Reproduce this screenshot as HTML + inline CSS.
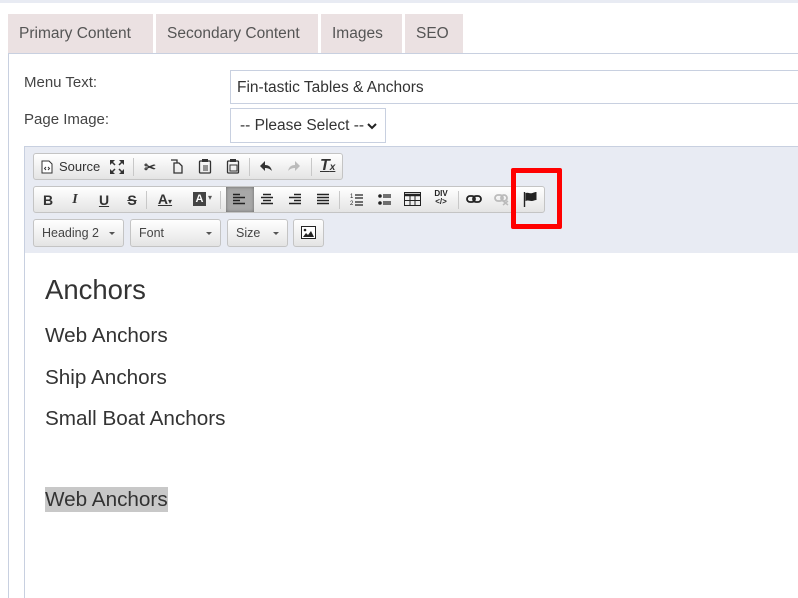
<!DOCTYPE html>
<html><head><meta charset="utf-8"><style>
*{box-sizing:border-box;margin:0;padding:0}
html,body{width:798px;height:598px;overflow:hidden}
body{background:#fff;font-family:"Liberation Sans",Arial,sans-serif;position:relative}
.a{position:absolute}
.tab{position:absolute;top:14px;height:39px;background:#ebe1e2;color:#555;font-size:15.5px;line-height:40px;padding-left:11px}
.lbl{position:absolute;left:24px;font-size:15px;color:#444}
.grp{position:absolute;border:1px solid #c4c4c4;border-radius:3px;background:linear-gradient(#fff,#e4e4e4);height:27px}
.ic{position:absolute;font-size:14px;color:#333;font-weight:bold;text-align:center;width:20px;line-height:16px}
.sep{position:absolute;width:1px;height:18px;background:#c8c8c8}
.combo{position:absolute;top:219px;height:28px;border:1px solid #c4c4c4;border-radius:3px;background:linear-gradient(#fff,#e4e4e4);font-size:12.5px;color:#444;line-height:26px;padding-left:8px}
.combo:after{content:"";position:absolute;right:8px;top:12px;border:3px solid transparent;border-top:3px solid #555}
.p{position:absolute;left:45px;font-size:20.7px;color:#333;font-family:"Liberation Sans",Arial,sans-serif}
</style></head><body>
<div class="a" style="left:0;top:0;width:798px;height:3px;background:#e8ebf3"></div>
<div class="tab" style="left:8px;width:145px">Primary Content</div>
<div class="tab" style="left:156px;width:162px">Secondary Content</div>
<div class="tab" style="left:321px;width:81px">Images</div>
<div class="tab" style="left:405px;width:58px">SEO</div>
<div class="a" style="left:8px;top:53px;width:790px;height:545px;border-left:1px solid #c8d0e0;border-top:1px solid #c8d0e0"></div>
<div class="lbl" style="top:74px">Menu Text:</div>
<div class="lbl" style="top:111px">Page Image:</div>
<div class="a" style="left:230px;top:70px;width:580px;height:34px;border:1px solid #c8d0e0;font-size:15.5px;color:#333;line-height:33px;padding-left:6px">Fin-tastic Tables &amp; Anchors</div>
<div class="a" style="left:230px;top:108px;width:156px;height:35px;border:1px solid #c8d0e0;font-size:15.5px;color:#333;line-height:34px;padding-left:9px">-- Please Select --</div>
<svg class="a" style="left:366px;top:121px" width="12" height="10"><path d="M2 3l4 4 4-4" stroke="#222" stroke-width="2" fill="none"/></svg>
<div class="a" style="left:24px;top:146px;width:780px;height:460px;border:1px solid #c8d0e0"></div>
<div class="a" style="left:25px;top:147px;width:773px;height:106px;background:#e8ebf3"></div>
<!-- row1 -->
<div class="grp" style="left:33px;top:153px;width:310px"></div>
<svg class="a" style="left:41px;top:160px" width="12" height="14"><path d="M1 1h7l3 3v9H1z" fill="#fff" stroke="#333"/><path d="M5 7l-1.5 1.5L5 10M7 7l1.5 1.5L7 10" stroke="#333" fill="none"/></svg>
<div class="a" style="left:59px;top:159px;font-size:13px;color:#333">Source</div>
<svg class="a" style="left:109px;top:159px" width="16" height="16"><path d="M1 1h5L1 6zM15 1h-5l5 5zM1 15h5L1 10zM15 15h-5l5-5z" fill="#333"/><path d="M3 3l3 3M13 3l-3 3M3 13l3-3M13 13l-3-3" stroke="#333" stroke-width="1.5"/></svg>
<div class="sep" style="left:133px;top:158px"></div>
<div class="ic" style="left:140px;top:159px">✂</div>
<svg class="a" style="left:170px;top:159px" width="14" height="15"><path d="M1 1h6v3M4 4h5l3 3v7H4z" fill="none" stroke="#333" stroke-width="1.3"/></svg>
<svg class="a" style="left:198px;top:158px" width="14" height="16"><rect x="1.5" y="3" width="11" height="12" rx="1" fill="none" stroke="#333" stroke-width="1.3"/><rect x="4" y="1" width="6" height="3" fill="#333"/><path d="M5 8h5M5 10h5M5 12h5" stroke="#333"/></svg>
<svg class="a" style="left:226px;top:158px" width="14" height="16"><rect x="1.5" y="3" width="11" height="12" rx="1" fill="none" stroke="#333" stroke-width="1.3"/><rect x="4" y="1" width="6" height="3" fill="#333"/><rect x="4" y="7" width="7" height="6" fill="none" stroke="#333"/></svg>
<div class="sep" style="left:249px;top:158px"></div>
<svg class="a" style="left:259px;top:160px" width="14" height="12"><path d="M6 1L1 6l5 5V8c3 0 5 1 7 3-1-4-3-6-7-6z" fill="#333"/></svg>
<svg class="a" style="left:287px;top:160px" width="14" height="12"><path d="M8 1l5 5-5 5V8C5 8 3 9 1 11c1-4 3-6 7-6z" fill="#bbb"/></svg>
<div class="sep" style="left:311px;top:158px"></div>
<div class="a" style="left:320px;top:157px;font-size:16px;font-style:italic;font-weight:bold;color:#333;text-decoration:underline">T<span style="font-size:10px">x</span></div>
<!-- row2 -->
<div class="grp" style="left:33px;top:186px;width:512px"></div>
<div class="a" style="left:226px;top:187px;width:28px;height:25px;background:#a8a8a8;box-shadow:inset 0 0 3px #666"></div>
<div class="ic" style="left:38px;top:192px">B</div>
<div class="ic" style="left:65px;top:192px;font-family:'Liberation Serif',serif;font-style:italic">I</div>
<div class="ic" style="left:94px;top:192px;text-decoration:underline">U</div>
<div class="ic" style="left:122px;top:192px;text-decoration:line-through">S</div>
<div class="sep" style="left:146px;top:191px"></div>
<div class="ic" style="left:155px;top:191px;text-decoration:underline">A<span style="font-size:8px;font-weight:normal">▾</span></div>
<div class="a" style="left:193px;top:192px;width:13px;height:14px;background:#444;color:#fff;font-size:11px;font-weight:bold;text-align:center;line-height:14px">A</div><div class="a" style="left:208px;top:193px;font-size:8px;color:#555">▾</div>
<div class="sep" style="left:220px;top:191px"></div>
<svg class="a" style="left:232px;top:193px" width="14" height="13"><path d="M1 1.5h7M1 4.5h12M1 7.5h7M1 10.5h12" stroke="#222" stroke-width="1.6"/></svg>
<svg class="a" style="left:260px;top:193px" width="14" height="13"><path d="M3 1.5h8M1 4.5h12M3 7.5h8M1 10.5h12" stroke="#222" stroke-width="1.6"/></svg>
<svg class="a" style="left:288px;top:193px" width="14" height="13"><path d="M6 1.5h7M1 4.5h12M6 7.5h7M1 10.5h12" stroke="#222" stroke-width="1.6"/></svg>
<svg class="a" style="left:316px;top:193px" width="14" height="13"><path d="M1 1.5h12M1 4.5h12M1 7.5h12M1 10.5h12" stroke="#222" stroke-width="1.6"/></svg>
<div class="sep" style="left:339px;top:191px"></div>
<svg class="a" style="left:350px;top:192px" width="14" height="14"><text x="0" y="6" font-size="6" fill="#222">1</text><text x="0" y="13" font-size="6" fill="#222">2</text><path d="M5 3h8M5 6h8M5 10h8M5 13h8" stroke="#222" stroke-width="1.2"/></svg>
<svg class="a" style="left:378px;top:192px" width="14" height="14"><circle cx="2" cy="4" r="1.8" fill="#222"/><circle cx="2" cy="11" r="1.8" fill="#222"/><path d="M5 3h8M5 5h8M5 10h8M5 12h8" stroke="#222" stroke-width="1.2"/></svg>
<svg class="a" style="left:404px;top:192px" width="17" height="14"><rect x="0.5" y="0.5" width="16" height="13" fill="none" stroke="#222"/><path d="M0 3h17" stroke="#222" stroke-width="2.5"/><path d="M0.5 8.5h16M6 3v11M11 3v11" stroke="#222"/></svg>
<div class="a" style="left:433px;top:190px;font-size:8px;line-height:8px;color:#222;font-weight:bold;text-align:center;width:16px">DIV<br>&lt;/&gt;</div>
<div class="sep" style="left:458px;top:191px"></div>
<svg class="a" style="left:466px;top:194px" width="16" height="10"><rect x="1" y="2" width="8" height="6" rx="3" fill="none" stroke="#222" stroke-width="1.8"/><rect x="7" y="2" width="8" height="6" rx="3" fill="none" stroke="#222" stroke-width="1.8"/></svg>
<svg class="a" style="left:494px;top:194px" width="16" height="12"><rect x="1" y="1" width="8" height="6" rx="3" fill="none" stroke="#bbb" stroke-width="1.8"/><rect x="7" y="1" width="6" height="6" rx="3" fill="none" stroke="#bbb" stroke-width="1.8"/><path d="M9 7l5 4M14 7l-5 4" stroke="#bbb" stroke-width="1.5"/></svg>
<svg class="a" style="left:523px;top:191px" width="15" height="17"><path d="M1.5 1v15" stroke="#222" stroke-width="1.4"/><path d="M2.5 2c3-1 4 1 7 0s3-1 4-1v8c-2 0-3 1-5 1s-3-1-6 0z" fill="#222"/></svg>
<!-- row3 -->
<div class="combo" style="left:33px;width:91px">Heading 2</div>
<div class="combo" style="left:130px;width:91px">Font</div>
<div class="combo" style="left:227px;width:61px">Size</div>
<div class="grp" style="left:293px;top:219px;width:31px;height:28px"></div>
<svg class="a" style="left:301px;top:226px" width="15" height="13"><rect x="0.5" y="0.5" width="14" height="12" fill="#fff" stroke="#222"/><path d="M2 11l3-4 2 2 3-4 3 6z" fill="#222"/><circle cx="4" cy="4" r="1.3" fill="#222"/></svg>
<!-- red box -->
<div class="a" style="left:511px;top:168px;width:51px;height:61px;border:5px solid #f00;border-radius:2px"></div>
<!-- content -->
<div class="p" style="top:274px;font-size:27.5px">Anchors</div>
<div class="p" style="top:324px">Web Anchors</div>
<div class="p" style="top:366px">Ship Anchors</div>
<div class="p" style="top:407px">Small Boat Anchors</div>
<div class="p" style="top:487px;background:#c8c8c8;line-height:25px">Web Anchors</div>
</body></html>
